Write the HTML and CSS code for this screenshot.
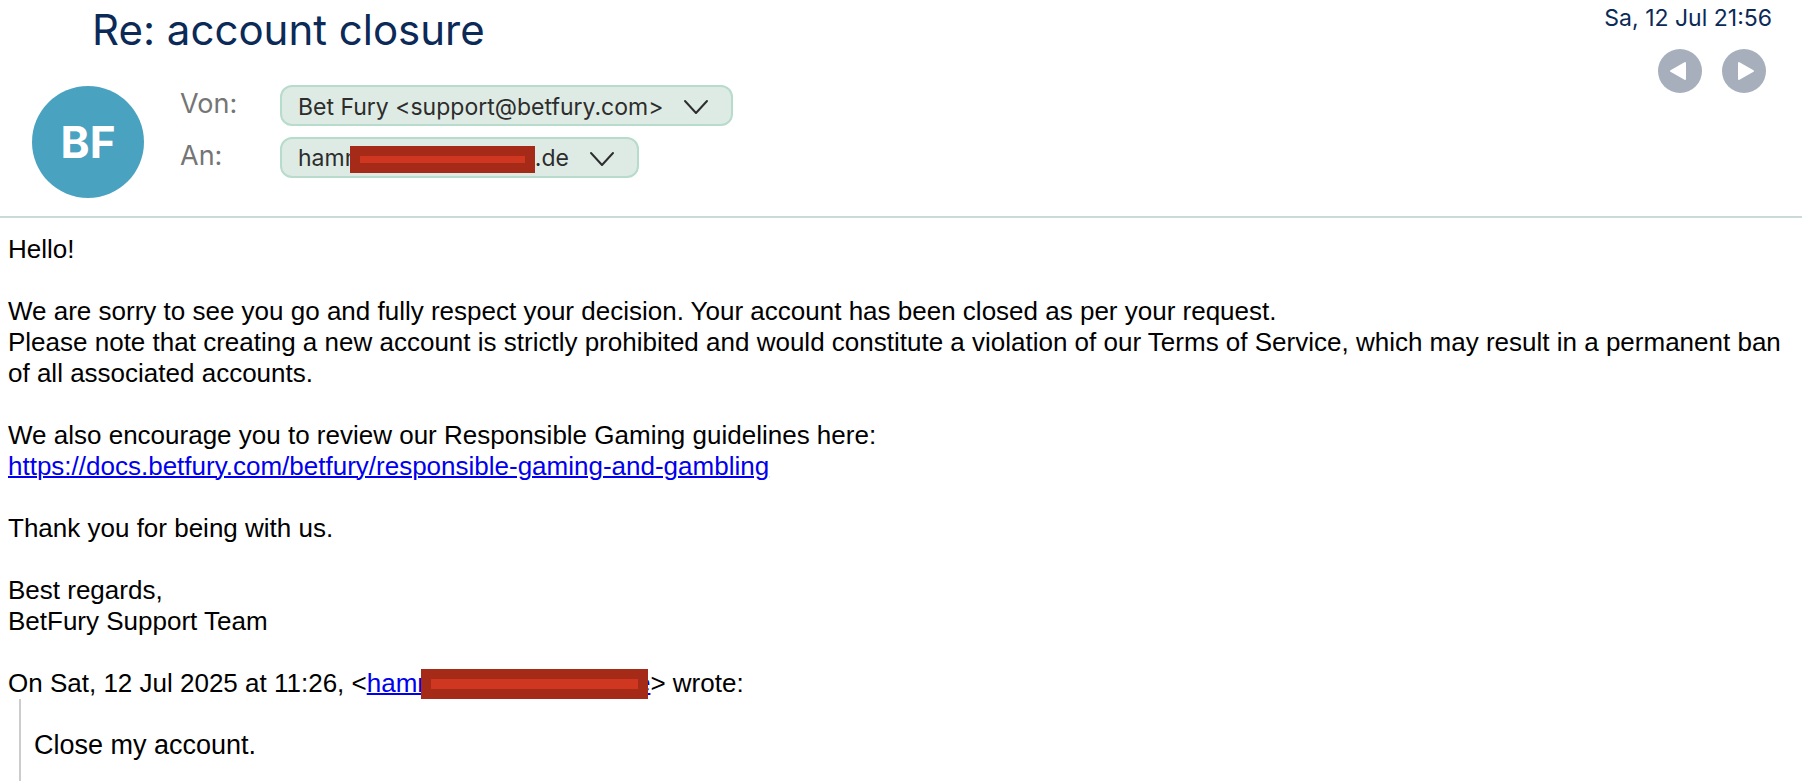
FILE: index.html
```html
<!DOCTYPE html>
<html lang="de">
<head>
<meta charset="utf-8">
<meta name="viewport" content="width=device-width, initial-scale=1">
<title>Re: account closure</title>
<link rel="stylesheet" href="styles.css">
</head>
<body>
<header class="mail-header">
  <div class="mail-main">
    <h1 class="subject">Re: account closure</h1>
    <div class="parties">
      <div class="avatar">BF</div>
      <div class="party-list">
        <span class="party-label" id="label-from">Von:</span>
        <button class="chip" type="button" aria-describedby="label-from">
          <span>Bet Fury &lt;support@betfury.com&gt;</span>
          <svg class="chevron" viewBox="0 0 26 16" aria-hidden="true"><path d="M2 2 L13 14 L24 2"/></svg>
        </button>
        <span class="party-label" id="label-to">An:</span>
        <button class="chip" type="button" aria-describedby="label-to">
          <span class="address">hamm<span class="redaction redaction-chip"></span>.de</span>
          <svg class="chevron" viewBox="0 0 26 16" aria-hidden="true"><path d="M2 2 L13 14 L24 2"/></svg>
        </button>
      </div>
    </div>
  </div>
  <div class="mail-side">
    <time class="date" datetime="2025-07-12T21:56">Sa, 12 Jul 21:56</time>
    <nav class="pager">
      <button class="pager-button" type="button" aria-label="Vorherige E-Mail">
        <svg viewBox="0 0 44 44" aria-hidden="true"><path d="M13 22 L27 14 V30 Z"/></svg>
      </button>
      <button class="pager-button" type="button" aria-label="Nächste E-Mail">
        <svg viewBox="0 0 44 44" aria-hidden="true"><path d="M31 22 L17 14 V30 Z"/></svg>
      </button>
    </nav>
  </div>
</header>
<main class="mail-body" lang="en">
  <p>Hello!</p>
  <p>We are sorry to see you go and fully respect your decision. Your account has been closed as per your request.<br>
  Please note that creating a new account is strictly prohibited and would constitute a violation of our Terms of Service, which may result in a permanent ban of all associated accounts.</p>
  <p>We also encourage you to review our Responsible Gaming guidelines here:<br>
  <a href="https://docs.betfury.com/betfury/responsible-gaming-and-gambling">https://docs.betfury.com/betfury/responsible-gaming-and-gambling</a></p>
  <p>Thank you for being with us.</p>
  <p>Best regards,<br>BetFury Support Team</p>
  <div class="quote-intro">On Sat, 12 Jul 2025 at 11:26, &lt;<a class="address" href="#">hamm<span class="redaction redaction-body"></span>e</a>&gt; wrote:</div>
  <blockquote class="quote">Close my account.</blockquote>
</main>
</body>
</html>
```
FILE: styles.css
```css
* {
  box-sizing: border-box;
}

body {
  margin: 0;
  background: #fff;
  color: #000;
}

button {
  font: inherit;
  color: inherit;
  border: 0;
  padding: 0;
  cursor: pointer;
}

.mail-header {
  display: flex;
  justify-content: space-between;
  padding-bottom: 18px;
  border-bottom: 2px solid #cbdad9;
  font-family: Inter, "Open Sans", sans-serif;
}

.subject {
  margin: 0;
  padding: 4px 0 0 92px;
  font-size: 42px;
  font-weight: 400;
  line-height: 52px;
  color: #0b2a57;
}

.parties {
  display: flex;
  gap: 36px;
  padding: 30px 0 0 32px;
}

.avatar {
  display: flex;
  flex: none;
  align-items: center;
  justify-content: center;
  width: 112px;
  height: 112px;
  border-radius: 50%;
  background: #4aa2c1;
  color: #fff;
  font-size: 44px;
  font-weight: 700;
}

.party-list {
  display: grid;
  grid-template-columns: 100px auto;
  align-content: start;
  justify-items: start;
  row-gap: 11px;
  margin-top: -1px;
}

.party-label {
  font-size: 27px;
  line-height: 38px;
  color: #757575;
}

.chip {
  display: flex;
  align-items: center;
  gap: 20px;
  height: 41px;
  padding: 2px 22px 0 16px;
  border: 2px solid #b7dccb;
  border-radius: 12px;
  background: #deebe4;
  color: #2d2d2d;
  font-size: 23px;
  white-space: nowrap;
}

.chevron {
  width: 26px;
  height: 16px;
  fill: none;
  stroke: #2d2d2d;
  stroke-width: 2;
  stroke-linecap: round;
  stroke-linejoin: round;
}

.address {
  white-space: nowrap;
}

.redaction {
  display: inline-block;
  vertical-align: middle;
  border: 10px solid #a52a17;
  background: #cf3720;
}

.redaction-chip {
  width: 185px;
  height: 27px;
  margin-left: -15px;
}

.redaction-body {
  position: relative;
  width: 227px;
  height: 30px;
  margin: -2px -12px 0 -18px;
}

.mail-side {
  display: flex;
  flex-direction: column;
  align-items: flex-end;
  padding: 4px 30px 0 0;
}

.date {
  font-size: 23px;
  line-height: 28px;
  color: #0b2a57;
}

.pager {
  display: flex;
  gap: 20px;
  padding: 17px 6px 0 0;
}

.pager-button {
  width: 44px;
  height: 44px;
  border-radius: 50%;
  background: #a7afbc;
}

.pager-button svg {
  display: block;
  fill: #fff;
  stroke: #fff;
  stroke-width: 2;
  stroke-linejoin: round;
}

.mail-body {
  padding: 16px 8px 0;
  font: 26px/31px "Liberation Sans", Arial, sans-serif;
}

.mail-body p {
  margin: 0 0 31px;
}

.mail-body a {
  color: #00e;
  text-decoration: underline;
  text-decoration-thickness: 2px;
}

.quote {
  margin: 0 0 0 11px;
  padding: 31px 0 21px 13px;
  border-left: 2px solid #ccc;
  font-size: 27px;
}
```
